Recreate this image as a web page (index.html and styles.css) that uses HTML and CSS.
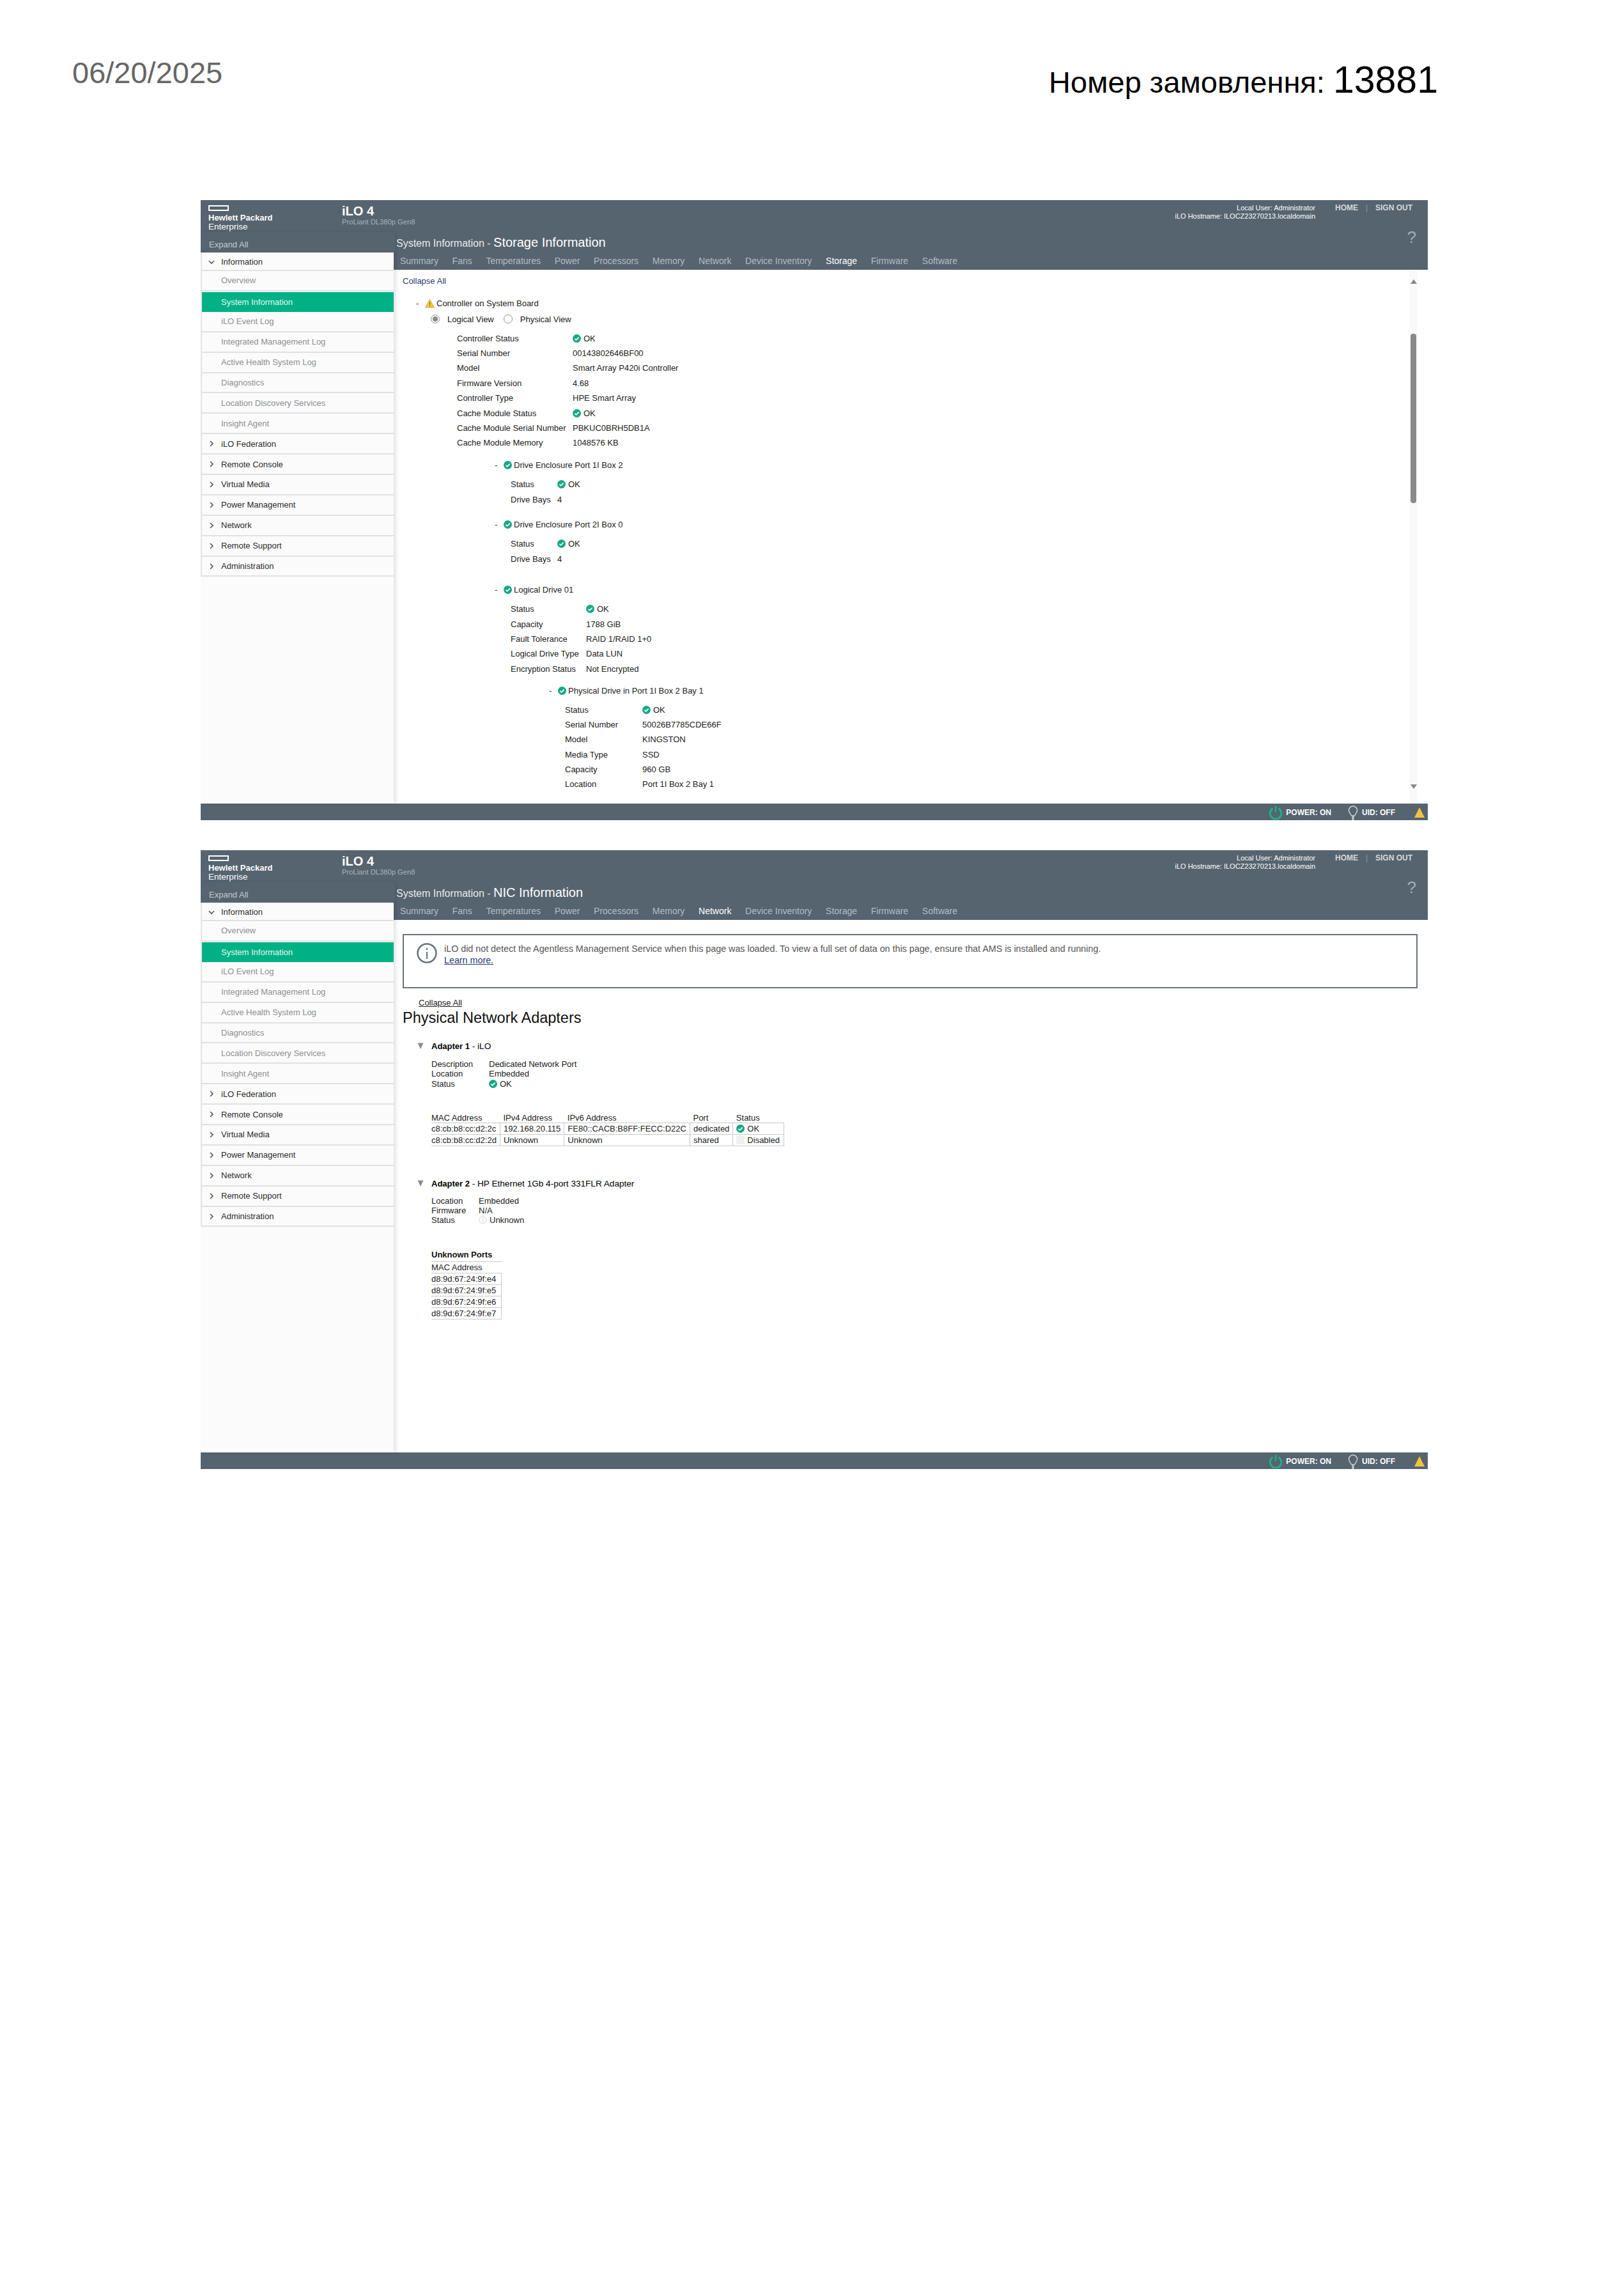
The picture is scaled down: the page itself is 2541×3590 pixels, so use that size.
FILE: index.html
```html
<!doctype html>
<html lang="uk">
  <head>
    <meta charset="UTF-8" />
    <title>Номер замовлення: 13881</title>
    <link rel="stylesheet" href="styles.css">
  </head>

  <body>
    <svg class="defs" width="0" height="0">
      <symbol id="ok" viewBox="0 0 14 14">
        <circle cx="7" cy="7" r="7" fill="#17a884" />
        <path d="M3.6 7.2l2.4 2.4 4.4-4.6" fill="none" stroke="#fff" stroke-width="1.7" />
      </symbol>
      <symbol id="warn" viewBox="0 0 16 16">
        <path d="M8 1l7.4 14H.6z" fill="#f5c33b" stroke="#c9a23a" stroke-width=".8" />
        <path d="M8 5.5v5.5M8 12v1.6" stroke="#6b5a20" stroke-width="1.1" />
      </symbol>
      <symbol id="down" viewBox="0 0 12 12">
        <path d="M2 4l4 4 4-4" fill="none" stroke="#555" stroke-width="1.6" />
      </symbol>
      <symbol id="right" viewBox="0 0 12 12">
        <path d="M4 2l4 4-4 4" fill="none" stroke="#555" stroke-width="1.6" />
      </symbol>
      <symbol id="tri" viewBox="0 0 12 12">
        <path d="M1.5 1.5h9L6 11z" fill="#8c8c8c" />
      </symbol>
      <symbol id="power" viewBox="0 0 24 24">
        <path d="M7 5.200a9.600 9.600 0 1 0 10 0" fill="none" stroke="#19b48c" stroke-width="3" />
        <path d="M12 1v10.500" stroke="#19b48c" stroke-width="2.400" />
      </symbol>
      <symbol id="bulb" viewBox="0 0 16 24">
        <path d="M5.500 16C4 12.500 1.500 11 1.500 7.500a6.500 6.500 0 0 1 13 0C14.500 11 12 12.500 10.500 16z" fill="none" stroke="#c9ced2" stroke-width="1.500" />
        <path d="M8 16v7" stroke="#c9ced2" stroke-width="3" />
      </symbol>
      <symbol id="info" viewBox="0 0 32 32">
        <circle cx="16" cy="16" r="14.500" fill="none" stroke="#68737c" stroke-width="2.500" />
        <path d="M16 8v3M16 14v11" stroke="#68737c" stroke-width="2.200" />
      </symbol>
      <symbol id="unknown" viewBox="0 0 14 14">
        <circle cx="7" cy="7" r="6.200" fill="#fafafa" stroke="#d8d8d8" />
        <path d="M7 3.500v1M7 6v4" stroke="#cfcfcf" />
      </symbol>
    </svg>

    <header class="page-head">
      <div class="print-date">06/20/2025</div>
      <div class="order">Номер замовлення: <span class="order-num">13881</span></div>
    </header>

    <main class="shots">
      <section class="ilo">
        <div class="masthead">
          <div class="brand">
            <div class="hpe-logo"></div>
            <div class="hpe-name">Hewlett Packard</div>
            <div class="hpe-sub">Enterprise</div>
          </div>
          <div class="product">
            <div class="product-name">iLO 4</div>
            <div class="product-model">ProLiant DL380p Gen8</div>
          </div>
          <div class="user-info">
            <div>Local User: Administrator</div>
            <div>iLO Hostname: ILOCZ23270213.localdomain</div>
          </div>
          <div class="top-links"><span>HOME</span><span class="top-sep">|</span><span>SIGN OUT</span></div>
        </div>
        <div class="ilo-body">
          <nav class="side">
            <div class="expand-all">Expand All</div>
            <ul class="menu">
              <li class="menu-top"><svg class="chev"><use href="#down" /></svg>Information</li>
              <li class="menu-sub">Overview</li>
              <li class="menu-sub active">System Information</li>
              <li class="menu-sub">iLO Event Log</li>
              <li class="menu-sub">Integrated Management Log</li>
              <li class="menu-sub">Active Health System Log</li>
              <li class="menu-sub">Diagnostics</li>
              <li class="menu-sub">Location Discovery Services</li>
              <li class="menu-sub">Insight Agent</li>
              <li class="menu-top"><svg class="chev"><use href="#right" /></svg>iLO Federation</li>
              <li class="menu-top"><svg class="chev"><use href="#right" /></svg>Remote Console</li>
              <li class="menu-top"><svg class="chev"><use href="#right" /></svg>Virtual Media</li>
              <li class="menu-top"><svg class="chev"><use href="#right" /></svg>Power Management</li>
              <li class="menu-top"><svg class="chev"><use href="#right" /></svg>Network</li>
              <li class="menu-top"><svg class="chev"><use href="#right" /></svg>Remote Support</li>
              <li class="menu-top"><svg class="chev"><use href="#right" /></svg>Administration</li>
            </ul>
          </nav>
          <div class="main">
            <div class="title-row">
              <div class="crumb">System Information - <span class="crumb-page">Storage Information</span></div>
              <div class="help">?</div>
            </div>
            <div class="tabs">
              <span>Summary</span><span>Fans</span><span>Temperatures</span><span>Power</span><span>Processors</span><span>Memory</span><span>Network</span><span>Device Inventory</span><span class="tab-on">Storage</span><span>Firmware</span><span>Software</span>
            </div>
            <div class="panel">
              <div class="panel-scroll">
                <div class="collapse-link">Collapse All</div>

                <div class="level-1">
                  <div class="node-head head-controller"><span class="dash">-</span><svg class="warn-ico"><use href="#warn" /></svg>Controller on System Board</div>
                  <div class="view-switch">
                    <span class="radio radio-on"></span><span class="view-label">Logical View</span>
                    <span class="radio"></span><span class="view-label">Physical View</span>
                  </div>
                  <div class="props props-controller">
                    <div>Controller Status</div><div><svg class="ok"><use href="#ok" /></svg>OK</div>
                    <div>Serial Number</div><div>00143802646BF00</div>
                    <div>Model</div><div>Smart Array P420i Controller</div>
                    <div>Firmware Version</div><div>4.68</div>
                    <div>Controller Type</div><div>HPE Smart Array</div>
                    <div>Cache Module Status</div><div><svg class="ok"><use href="#ok" /></svg>OK</div>
                    <div>Cache Module Serial Number</div><div>PBKUC0BRH5DB1A</div>
                    <div>Cache Module Memory</div><div>1048576 KB</div>
                  </div>

                  <div class="level-2 node-enc1">
                    <div class="node-head"><span class="dash">-</span><svg class="ok ok-head"><use href="#ok" /></svg>Drive Enclosure Port 1I Box 2</div>
                    <div class="props props-enc">
                      <div>Status</div><div><svg class="ok"><use href="#ok" /></svg>OK</div>
                      <div>Drive Bays</div><div>4</div>
                    </div>
                  </div>

                  <div class="level-2 node-enc2">
                    <div class="node-head"><span class="dash">-</span><svg class="ok ok-head"><use href="#ok" /></svg>Drive Enclosure Port 2I Box 0</div>
                    <div class="props props-enc">
                      <div>Status</div><div><svg class="ok"><use href="#ok" /></svg>OK</div>
                      <div>Drive Bays</div><div>4</div>
                    </div>
                  </div>

                  <div class="level-2 node-logical">
                    <div class="node-head"><span class="dash">-</span><svg class="ok ok-head"><use href="#ok" /></svg>Logical Drive 01</div>
                    <div class="props props-logical">
                      <div>Status</div><div><svg class="ok"><use href="#ok" /></svg>OK</div>
                      <div>Capacity</div><div>1788 GiB</div>
                      <div>Fault Tolerance</div><div>RAID 1/RAID 1+0</div>
                      <div>Logical Drive Type</div><div>Data LUN</div>
                      <div>Encryption Status</div><div>Not Encrypted</div>
                    </div>

                    <div class="level-3">
                      <div class="node-head"><span class="dash">-</span><svg class="ok ok-head"><use href="#ok" /></svg>Physical Drive in Port 1I Box 2 Bay 1</div>
                      <div class="props props-physical">
                        <div>Status</div><div><svg class="ok"><use href="#ok" /></svg>OK</div>
                        <div>Serial Number</div><div>50026B7785CDE66F</div>
                        <div>Model</div><div>KINGSTON</div>
                        <div>Media Type</div><div>SSD</div>
                        <div>Capacity</div><div>960 GB</div>
                        <div>Location</div><div>Port 1I Box 2 Bay 1</div>
                      </div>
                    </div>
                  </div>
                </div>
              </div>
              <div class="scrollbar">
                <div class="arrow-up"></div>
                <div class="thumb"></div>
                <div class="arrow-down"></div>
              </div>
            </div>
          </div>
        </div>
        <div class="status-bar">
          <svg class="power-ico"><use href="#power" /></svg><span class="status-power">POWER: ON</span>
          <svg class="bulb-ico"><use href="#bulb" /></svg><span class="status-uid">UID: OFF</span>
          <span class="status-warn"></span>
        </div>
      </section>

      <section class="ilo ilo-nic">
        <div class="masthead">
          <div class="brand">
            <div class="hpe-logo"></div>
            <div class="hpe-name">Hewlett Packard</div>
            <div class="hpe-sub">Enterprise</div>
          </div>
          <div class="product">
            <div class="product-name">iLO 4</div>
            <div class="product-model">ProLiant DL380p Gen8</div>
          </div>
          <div class="user-info">
            <div>Local User: Administrator</div>
            <div>iLO Hostname: ILOCZ23270213.localdomain</div>
          </div>
          <div class="top-links"><span>HOME</span><span class="top-sep">|</span><span>SIGN OUT</span></div>
        </div>
        <div class="ilo-body">
          <nav class="side">
            <div class="expand-all">Expand All</div>
            <ul class="menu">
              <li class="menu-top"><svg class="chev"><use href="#down" /></svg>Information</li>
              <li class="menu-sub">Overview</li>
              <li class="menu-sub active">System Information</li>
              <li class="menu-sub">iLO Event Log</li>
              <li class="menu-sub">Integrated Management Log</li>
              <li class="menu-sub">Active Health System Log</li>
              <li class="menu-sub">Diagnostics</li>
              <li class="menu-sub">Location Discovery Services</li>
              <li class="menu-sub">Insight Agent</li>
              <li class="menu-top"><svg class="chev"><use href="#right" /></svg>iLO Federation</li>
              <li class="menu-top"><svg class="chev"><use href="#right" /></svg>Remote Console</li>
              <li class="menu-top"><svg class="chev"><use href="#right" /></svg>Virtual Media</li>
              <li class="menu-top"><svg class="chev"><use href="#right" /></svg>Power Management</li>
              <li class="menu-top"><svg class="chev"><use href="#right" /></svg>Network</li>
              <li class="menu-top"><svg class="chev"><use href="#right" /></svg>Remote Support</li>
              <li class="menu-top"><svg class="chev"><use href="#right" /></svg>Administration</li>
            </ul>
          </nav>
          <div class="main">
            <div class="title-row">
              <div class="crumb">System Information - <span class="crumb-page">NIC Information</span></div>
              <div class="help">?</div>
            </div>
            <div class="tabs">
              <span>Summary</span><span>Fans</span><span>Temperatures</span><span>Power</span><span>Processors</span><span>Memory</span><span class="tab-on">Network</span><span>Device Inventory</span><span>Storage</span><span>Firmware</span><span>Software</span>
            </div>
            <div class="panel">
              <div class="panel-scroll">
                <div class="notice">
                  <svg class="notice-ico"><use href="#info" /></svg>
                  <div class="notice-text">
                    iLO did not detect the Agentless Management Service when this page was loaded. To view a full set of data on this page, ensure that AMS is installed and running.<br />
                    <a class="notice-link">Learn more.</a>
                  </div>
                </div>
                <div class="collapse-plain">Collapse All</div>
                <h2 class="nic-title">Physical Network Adapters</h2>

                <div class="adapter adapter-1">
                  <div class="adapter-head"><svg class="tri"><use href="#tri" /></svg><b>Adapter 1</b>&nbsp;- iLO</div>
                  <div class="facts facts-1">
                    <div>Description</div><div>Dedicated Network Port</div>
                    <div>Location</div><div>Embedded</div>
                    <div>Status</div><div><svg class="ok"><use href="#ok" /></svg>OK</div>
                  </div>
                  <table class="ports">
                    <thead>
                      <tr><th>MAC Address</th><th>IPv4 Address</th><th>IPv6 Address</th><th>Port</th><th>Status</th></tr>
                    </thead>
                    <tbody>
                      <tr><td>c8:cb:b8:cc:d2:2c</td><td>192.168.20.115</td><td>FE80::CACB:B8FF:FECC:D22C</td><td>dedicated</td><td><svg class="ok"><use href="#ok" /></svg>OK</td></tr>
                      <tr><td>c8:cb:b8:cc:d2:2d</td><td>Unknown</td><td>Unknown</td><td>shared</td><td><span class="disabled-ico"></span>Disabled</td></tr>
                    </tbody>
                  </table>
                </div>

                <div class="adapter adapter-2">
                  <div class="adapter-head"><svg class="tri"><use href="#tri" /></svg><b>Adapter 2</b>&nbsp;- HP Ethernet 1Gb 4-port 331FLR Adapter</div>
                  <div class="facts facts-2">
                    <div>Location</div><div>Embedded</div>
                    <div>Firmware</div><div>N/A</div>
                    <div>Status</div><div><svg class="ok"><use href="#unknown" /></svg>Unknown</div>
                  </div>
                  <table class="ports ports-unknown">
                    <thead>
                      <tr><th class="ports-title">Unknown Ports</th></tr>
                      <tr><th>MAC Address</th></tr>
                    </thead>
                    <tbody>
                      <tr><td>d8:9d:67:24:9f:e4</td></tr>
                      <tr><td>d8:9d:67:24:9f:e5</td></tr>
                      <tr><td>d8:9d:67:24:9f:e6</td></tr>
                      <tr><td>d8:9d:67:24:9f:e7</td></tr>
                    </tbody>
                  </table>
                </div>
              </div>
            </div>
          </div>
        </div>
        <div class="status-bar">
          <svg class="power-ico"><use href="#power" /></svg><span class="status-power">POWER: ON</span>
          <svg class="bulb-ico"><use href="#bulb" /></svg><span class="status-uid">UID: OFF</span>
          <span class="status-warn"></span>
        </div>
      </section>
    </main>
  </body>
</html>
```

FILE: styles.css
```css
* {
  box-sizing: border-box;
}

body {
  margin: 0;
  background: #fff;
  color: #222;
  font-family: "Liberation Sans", Arial, sans-serif;
  font-size: 13px;
}

.defs {
  position: absolute;
}

/* print header */
.page-head {
  display: flex;
  justify-content: space-between;
  height: 313px;
  padding: 87px 291px 0 113px;
}

.print-date {
  font-size: 47px;
  line-height: 54px;
  color: #666;
}

.order {
  margin-top: 8px;
  font-size: 47px;
  line-height: 60px;
  color: #000;
}

.order-num {
  font-size: 59px;
}

.shots {
  display: flex;
  flex-direction: column;
  gap: 47px;
  width: 1920px;
  margin-left: 314px;
}

/* iLO window */
.ilo {
  display: flex;
  flex-direction: column;
  height: 970px;
}

.ilo-nic {
  height: 968px;
}

.masthead {
  display: flex;
  height: 50px;
  background: #566470;
  color: #fff;
}

.brand {
  width: 221px;
  padding: 8px 0 0 12px;
}

.hpe-logo {
  width: 32px;
  height: 9px;
  border: 2px solid #fff;
  margin-bottom: 4px;
}

.hpe-name {
  font-size: 13px;
  font-weight: bold;
  line-height: 14px;
}

.hpe-sub {
  font-size: 13.500px;
  line-height: 13px;
}

.product {
  padding-top: 8px;
}

.product-name {
  font-size: 20px;
  font-weight: bold;
  line-height: 19px;
}

.product-model {
  font-size: 11.200px;
  line-height: 14px;
  color: #aab2b8;
}

.user-info {
  margin-left: auto;
  padding-top: 6px;
  font-size: 11px;
  line-height: 13px;
  text-align: right;
}

.top-links {
  display: flex;
  width: 176px;
  padding: 5px 24px 0 31px;
  justify-content: space-between;
  font-size: 12px;
  font-weight: bold;
  line-height: 14px;
  color: #d5d9dc;
}

.top-sep {
  font-weight: normal;
  color: #8a96a0;
}

.ilo-body {
  display: flex;
  flex: 1;
  min-height: 0;
}

/* left menu */
.side {
  display: flex;
  flex-direction: column;
  width: 302px;
  background: #fbfbfb;
  box-shadow: 4px 0 5px rgba(0, 0, 0, 0.1);
  z-index: 1;
}

.expand-all {
  height: 32px;
  margin-right: -2px;
  padding: 12px 0 0 13px;
  background: #566470;
  color: #c3c9ce;
  line-height: 15px;
}

.menu {
  margin: 0;
  padding: 0;
  border-left: 2px solid #e4e4e4;
  list-style: none;
}

.menu li {
  display: flex;
  align-items: center;
  height: 31.900px;
  padding-left: 30px;
  border-bottom: 2px solid #e0e1e2;
}

.menu li:first-child {
  height: 29px;
  padding-top: 2px;
}

.menu-top {
  color: #2b2b2b;
}

.menu-sub {
  color: #8b8f92;
}

.menu li.active {
  height: 31px;
  margin-top: 1px;
  border-bottom: 0;
  background: #01b186;
  color: #e6f8f3;
}

.chev {
  width: 12px;
  height: 12px;
  margin-left: -21px;
  margin-right: 9px;
}

/* right part */
.main {
  display: flex;
  flex-direction: column;
  flex: 1;
  min-width: 0;
}

.title-row {
  display: flex;
  justify-content: space-between;
  height: 32px;
  padding: 3px 18px 0 4px;
  background: #566470;
}

.crumb {
  font-size: 16px;
  line-height: 27px;
  color: #e8eaec;
}

.crumb-page {
  font-size: 20px;
  color: #fff;
}

.help {
  margin-top: -7px;
  font-size: 26px;
  line-height: 24px;
  color: #a4adb4;
}

.tabs {
  display: flex;
  gap: 21.700px;
  height: 27px;
  padding: 5px 0 0 10px;
  background: #566470;
  font-size: 14px;
  line-height: 16px;
  color: #b4bcc2;
}

.tab-on {
  color: #fff;
}

.panel {
  display: flex;
  flex: 1;
  min-height: 0;
  background: #fff;
}

.panel-scroll {
  flex: 1;
  min-width: 0;
  overflow: hidden;
  padding: 9px 0 0 14px;
}

.collapse-link {
  line-height: 17px;
  color: #1f3d6e;
}

/* storage tree */
.level-1 {
  margin-left: 21px;
}

.node-head {
  display: flex;
  align-items: center;
  height: 20px;
  color: #222;
}

.head-controller {
  margin-top: 16px;
}

.dash {
  width: 14px;
  color: #333;
}

.warn-ico {
  width: 15px;
  height: 15px;
  margin-right: 3px;
}

.view-switch {
  display: flex;
  align-items: center;
  height: 20px;
  margin: 5px 0 0 23px;
}

.radio {
  width: 14px;
  height: 14px;
  border: 1px solid #8f8f8f;
  border-radius: 50%;
  background: #fff;
}

.radio-on {
  border-color: #aaa;
  box-shadow: inset 0 0 0 2px #fff;
  background: #8b8b8b;
}

.view-label {
  margin: 0 15px 0 12px;
  color: #222;
}

.props {
  display: grid;
  grid-auto-rows: 23.400px;
  align-items: center;
  margin: 8.300px 0 0 25px;
  color: #222;
}

.props > div {
  display: flex;
  align-items: center;
}

.props-controller {
  grid-template-columns: 181px auto;
  margin: 8.500px 0 0 64px;
}

.props-enc {
  grid-template-columns: 73px auto;
}

.props-logical {
  grid-template-columns: 118px auto;
}

.props-physical {
  grid-template-columns: 121px auto;
}

.ok {
  flex: none;
  width: 13px;
  height: 13px;
  margin-right: 4px;
}

.ok-head {
  margin-right: 3px;
}

.level-2 {
  margin-left: 123px;
}

.node-enc1 {
  margin-top: 13px;
}

.node-enc2 {
  margin-top: 18px;
}

.node-logical {
  margin-top: 27px;
}

.level-3 {
  margin: 12px 0 0 85px;
}

/* scrollbar */
.scrollbar {
  display: flex;
  flex-direction: column;
  align-items: center;
  width: 13px;
  margin-right: 16px;
  padding-top: 15px;
  background: #f9f9f9;
}

.arrow-up,
.arrow-down {
  width: 0;
  height: 0;
  border-left: 5px solid transparent;
  border-right: 5px solid transparent;
}

.arrow-up {
  border-bottom: 7px solid #888;
}

.arrow-down {
  margin-top: 440px;
  border-top: 7px solid #888;
}

.thumb {
  width: 9px;
  height: 265px;
  margin-top: 78px;
  border-radius: 4px;
  background: #8a8a8a;
}

/* NIC page */
.notice {
  display: flex;
  width: 1588px;
  height: 85px;
  margin-top: 13px;
  padding: 12px 0 0 20px;
  border: 2px solid #68737c;
}

.notice-ico {
  flex: none;
  width: 32px;
  height: 32px;
  margin-right: 11px;
}

.notice-text {
  font-size: 14.300px;
  line-height: 18px;
  color: #555;
}

.notice-link {
  text-decoration: underline;
  color: #1f3d6e;
}

.collapse-plain {
  margin: 15px 0 0 25px;
  line-height: 16px;
  text-decoration: underline;
  color: #222;
}

.nic-title {
  margin: 0;
  font-size: 23.500px;
  font-weight: normal;
  line-height: 30px;
  color: #111;
}

.adapter {
  margin-left: 22px;
}

.adapter-1 {
  margin-top: 21px;
}

.adapter-2 {
  margin-top: 50px;
}

.adapter-head {
  display: flex;
  align-items: center;
  height: 16px;
  font-size: 13.600px;
  color: #000;
}

.adapter-head b {
  font-size: 13px;
}

.tri {
  width: 12px;
  height: 12px;
  margin-right: 11px;
}

.facts {
  display: grid;
  grid-auto-rows: 15.300px;
  margin: 13px 0 0 23px;
  color: #222;
}

.facts > div {
  display: flex;
  align-items: center;
}

.facts-1 {
  grid-template-columns: 90px auto;
}

.facts-2 {
  grid-template-columns: 74px auto;
  margin-top: 11px;
}

.ports {
  margin: 37px 0 0 23px;
  border-collapse: collapse;
  font-size: 13px;
  color: #222;
}

.ports th {
  height: 17px;
  padding: 0 6px 0 0;
  font-weight: normal;
  text-align: left;
}

.ports td {
  height: 18px;
  padding: 0 5px 0 5px;
  border: 1px solid #c9c9c9;
  white-space: nowrap;
}

.ports td:last-child {
  padding-right: 6px;
}

.ports th + th {
  padding-left: 5px;
}

.ports td:first-child {
  padding-left: 0;
  border-left: 0;
}

.ports td .ok,
.disabled-ico {
  vertical-align: -2px;
}

.disabled-ico {
  display: inline-block;
  width: 13px;
  height: 13px;
  margin-right: 4px;
  background: #f0f0f0;
}

.ports-unknown {
  width: 110px;
  margin-top: 36px;
}

.ports th.ports-title {
  height: 21px;
  border-bottom: 1px solid #c9c9c9;
  font-weight: bold;
  color: #111;
}

.ports-unknown th {
  height: 18px;
}

/* bottom bar */
.status-bar {
  display: flex;
  align-items: center;
  justify-content: flex-end;
  height: 26px;
  padding: 1px 5px 0 0;
  background: #566470;
  font-size: 12px;
  font-weight: bold;
  color: #fff;
}

.power-ico {
  width: 22px;
  height: 22px;
  margin-right: 5px;
}

.status-power {
  margin-right: 26px;
}

.bulb-ico {
  width: 16px;
  height: 24px;
  margin: 2px 6px 0 0;
}

.status-uid {
  margin-right: 30px;
}

.status-warn {
  width: 0;
  height: 0;
  border-left: 8px solid transparent;
  border-right: 8px solid transparent;
  border-bottom: 16px solid #f5c33b;
}
```
